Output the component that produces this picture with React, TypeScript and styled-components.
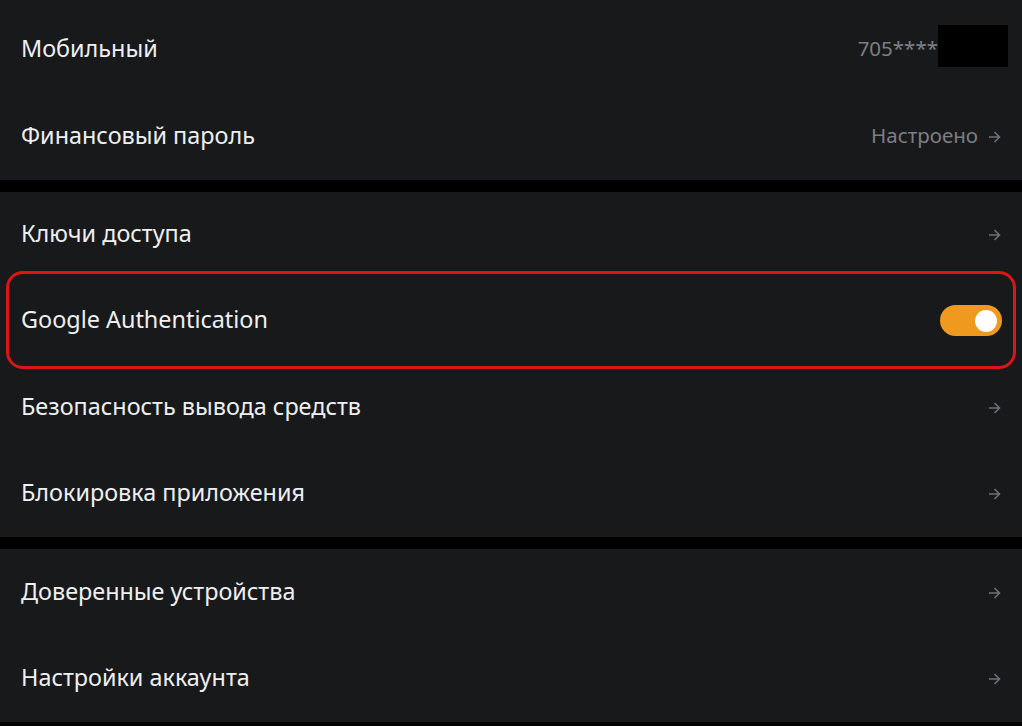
import React from "react";
import styled, { createGlobalStyle } from "styled-components";

const Global = createGlobalStyle`
  html, body { margin: 0; padding: 0; background: #000; }
  body { font-family: "Noto Sans", "Liberation Sans", sans-serif; }
`;

const Page = styled.div`
  width: 1022px;
  height: 726px;
  overflow: hidden;
  background: #000;
  display: flex;
  flex-direction: column;
  gap: 12px;
  position: relative;
`;

const Group = styled.div<{ $padTop?: number }>`
  background: #18191b;
  padding-top: ${(p) => p.$padTop ?? 0}px;
  display: flex;
  flex-direction: column;
`;

const Row = styled.div<{ $h?: number }>`
  height: ${(p) => p.$h ?? 86}px;
  display: flex;
  align-items: center;
  justify-content: space-between;
  padding: 0 21px 0 21px;
  position: relative;
`;

const Label = styled.span`
  color: #eef0f2;
  font-size: 23.4px;
  line-height: 30px;
  margin-bottom: 4px;
`;

const Right = styled.div`
  display: flex;
  align-items: center;
  gap: 10px;
  color: #7c7f85;
  font-size: 20.5px;
  line-height: 28px;
`;

const Muted = styled.span`
  margin-bottom: 4px;
`;

const Redact = styled.span`
  display: inline-block;
  width: 70px;
  height: 42px;
  background: #000;
  margin-left: -10px;
  margin-right: -7px;
  margin-bottom: 7px;
`;

const Toggle = styled.div`
  width: 62px;
  height: 31px;
  border-radius: 16px;
  background: #f0991f;
  position: relative;
  margin-right: -1px;
  margin-bottom: 1px;
`;

const Knob = styled.div`
  position: absolute;
  top: 4.5px;
  right: 5px;
  width: 22px;
  height: 22px;
  border-radius: 50%;
  background: #fff;
`;

const Highlight = styled.div`
  position: absolute;
  left: 6px;
  top: 271px;
  width: 1004px;
  height: 92px;
  border: 3px solid #dc1616;
  border-radius: 17px;
  pointer-events: none;
`;

const Arrow = () => (
  <svg width="13" height="12" viewBox="0 0 13 12" fill="none">
    <path d="M1 6h10.5M6.5 1l5 5-5 5" stroke="#6d7075" strokeWidth="1.6" />
  </svg>
);

export default function App() {
  return (
    <Page>
      <Global />
      <Group $padTop={6}>
        <Row $h={87}>
          <Label>Мобильный</Label>
          <Right>
            <Muted>705****</Muted>
            <Redact />
          </Right>
        </Row>
        <Row $h={87}>
          <Label>Финансовый пароль</Label>
          <Right>
            <Muted>Настроено</Muted>
            <Arrow />
          </Right>
        </Row>
      </Group>
      <Group>
        <Row>
          <Label>Ключи доступа</Label>
          <Right>
            <Arrow />
          </Right>
        </Row>
        <Row>
          <Label>Google Authentication</Label>
          <Toggle>
            <Knob />
          </Toggle>
        </Row>
        <Row $h={87}>
          <Label>Безопасность вывода средств</Label>
          <Right>
            <Arrow />
          </Right>
        </Row>
        <Row $h={86}>
          <Label>Блокировка приложения</Label>
          <Right>
            <Arrow />
          </Right>
        </Row>
      </Group>
      <Group>
        <Row $h={87}>
          <Label>Доверенные устройства</Label>
          <Right>
            <Arrow />
          </Right>
        </Row>
        <Row $h={86}>
          <Label>Настройки аккаунта</Label>
          <Right>
            <Arrow />
          </Right>
        </Row>
      </Group>
      <Highlight />
    </Page>
  );
}
